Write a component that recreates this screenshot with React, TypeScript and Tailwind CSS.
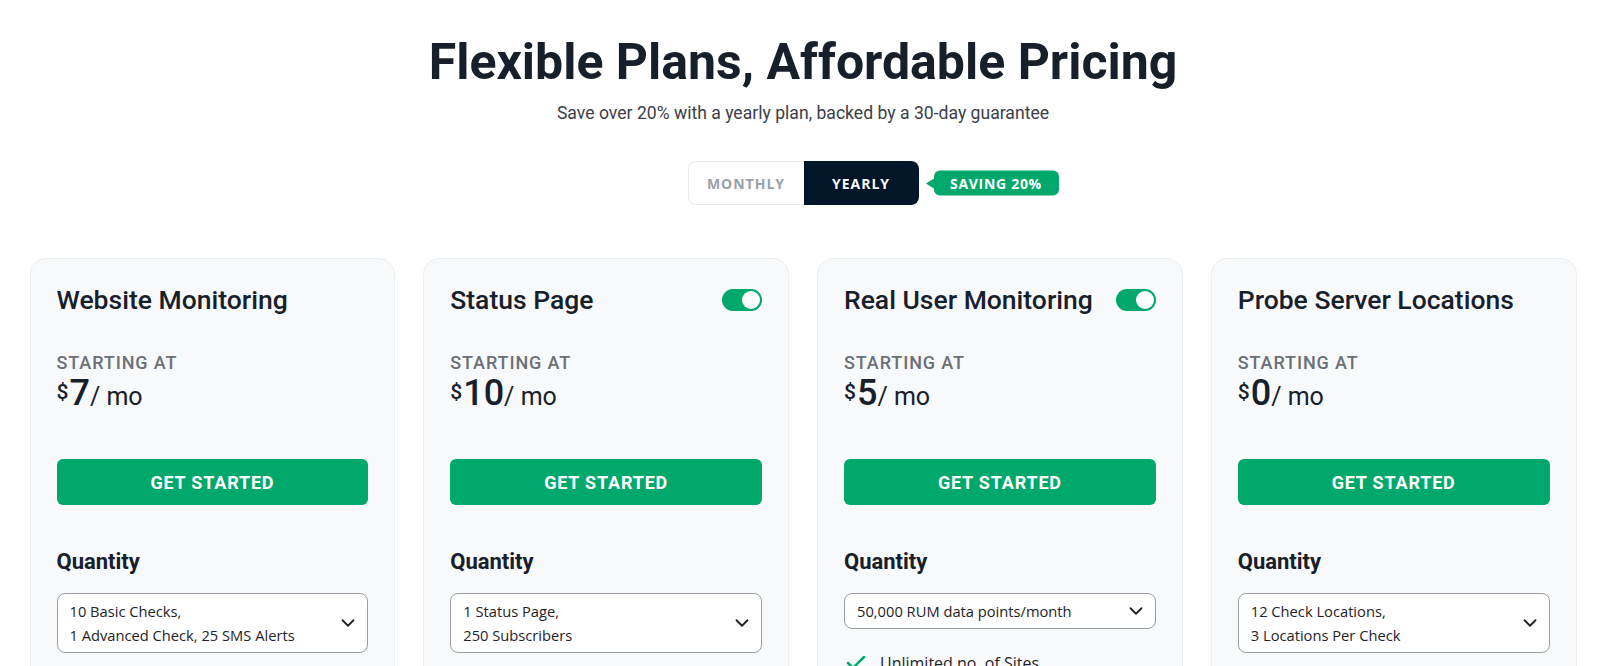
import { Check, ChevronDown } from "lucide-react";

type Plan = {
  name: string;
  price: string;
  toggle?: boolean;
  quantity: string[];
  features: string[];
};

const plans: Plan[] = [
  {
    name: "Website Monitoring",
    price: "7",
    quantity: ["10 Basic Checks,", "1 Advanced Check, 25 SMS Alerts"],
    features: ["1 min Check Interval", "Unlimited Alert Contacts", "Email & Slack Alerts"],
  },
  {
    name: "Status Page",
    price: "10",
    toggle: true,
    quantity: ["1 Status Page,", "250 Subscribers"],
    features: ["Custom Domain", "Private Status Page", "Incident History"],
  },
  {
    name: "Real User Monitoring",
    price: "5",
    toggle: true,
    quantity: ["50,000 RUM data points/month"],
    features: ["Unlimited no. of Sites", "Core Web Vitals", "Page Load Analytics"],
  },
  {
    name: "Probe Server Locations",
    price: "0",
    quantity: ["12 Check Locations,", "3 Locations Per Check"],
    features: ["Global Probe Network", "Regional Reports", "Location Failover"],
  },
];

function Switch() {
  return (
    <span className="flex h-[22px] w-[40px] shrink-0 items-center justify-end rounded-full bg-[#00a86b] px-[2px]">
      <span className="h-[18px] w-[18px] rounded-full bg-white" />
    </span>
  );
}

function PlanCard({ plan }: { plan: Plan }) {
  return (
    <div className="rounded-2xl border border-[#eceef2] bg-[#f8f9fb] px-[26px] pt-[25px] pb-[40px]">
      <div className="flex h-[32px] items-center justify-between">
        <h3 className="text-[26.5px] font-medium leading-[32px] text-[#17202a]">{plan.name}</h3>
        {plan.toggle && <Switch />}
      </div>

      <p className="mt-[35px] text-[18px] font-medium uppercase leading-[24px] tracking-[0.9px] text-[#6b7077]">
        Starting at
      </p>
      <p className="-mt-[2px] leading-[40px] text-[#17202a]">
        <span className="relative -top-[6px] mr-[1px] text-[21px] font-medium">$</span>
        <span className="text-[36px] font-medium">{plan.price}</span>
        <span className="text-[25px]">/ mo</span>
      </p>

      <button className="mt-[39px] h-[46px] w-full rounded-md bg-[#00a86b] text-[18px] font-bold uppercase tracking-[0.8px] text-white">
        Get Started
      </button>

      <p className="mt-[43px] text-[22px] font-bold leading-[28px] text-[#17202a]">Quantity</p>

      <div className="mt-[17px] flex items-center justify-between rounded-lg border border-[#9a9ea5] bg-white py-[5px] pl-[12px] pr-[8px] font-['Open_Sans',sans-serif] text-[14.7px] leading-[24px] text-[#1f2328]">
        <div>
          {plan.quantity.map((q) => (
            <div key={q}>{q}</div>
          ))}
        </div>
        <ChevronDown className="h-[22px] w-[22px]" strokeWidth={2} />
      </div>

      <ul className="mt-[22px] space-y-2 font-['Open_Sans',sans-serif] text-[16px] leading-[24px] text-[#1f2328]">
        {plan.features.map((f) => (
          <li key={f} className="flex items-center gap-3">
            <Check className="h-6 w-6 text-[#00a86b]" strokeWidth={2.5} />
            {f}
          </li>
        ))}
      </ul>
    </div>
  );
}

export default function App() {
  return (
    <div className="h-[666px] overflow-hidden bg-white pr-[17px] font-['Roboto',sans-serif]">
      <div className="mx-auto max-w-[1547px]">
        <div className="pt-[34px] text-center">
          <h1 className="text-[50px] font-bold leading-[56px] text-[#17202a]">
            Flexible Plans, Affordable Pricing
          </h1>
          <p className="mt-[11px] text-[17.6px] leading-[24px] text-[#3b4048]">
            Save over 20% with a yearly plan, backed by a 30-day guarantee
          </p>
        </div>

        <div className="mt-[36px] flex justify-center">
          <div className="relative flex font-['Open_Sans',sans-serif] text-[14px] font-bold tracking-[1px]">
            <button className="h-[44px] w-[116px] rounded-l-lg border border-r-0 border-[#e8eaed] bg-white uppercase text-[#9aa0a6]">
              Monthly
            </button>
            <button className="h-[44px] w-[115px] rounded-r-lg bg-[#021629] uppercase text-white">
              Yearly
            </button>
            <div className="absolute left-full top-1/2 ml-[7px] flex -translate-y-1/2 items-center">
              <span className="h-0 w-0 border-y-[5px] border-r-[8px] border-y-transparent border-r-[#00a86b]" />
              <span className="flex h-[25px] w-[125px] items-center justify-center rounded-md bg-[#00a86b] uppercase tracking-[0.7px] text-white">
                Saving 20%
              </span>
            </div>
          </div>
        </div>

        <div className="mt-[53px] grid grid-cols-4 gap-[28px]">
          {plans.map((p) => (
            <PlanCard key={p.name} plan={p} />
          ))}
        </div>
      </div>
    </div>
  );
}
